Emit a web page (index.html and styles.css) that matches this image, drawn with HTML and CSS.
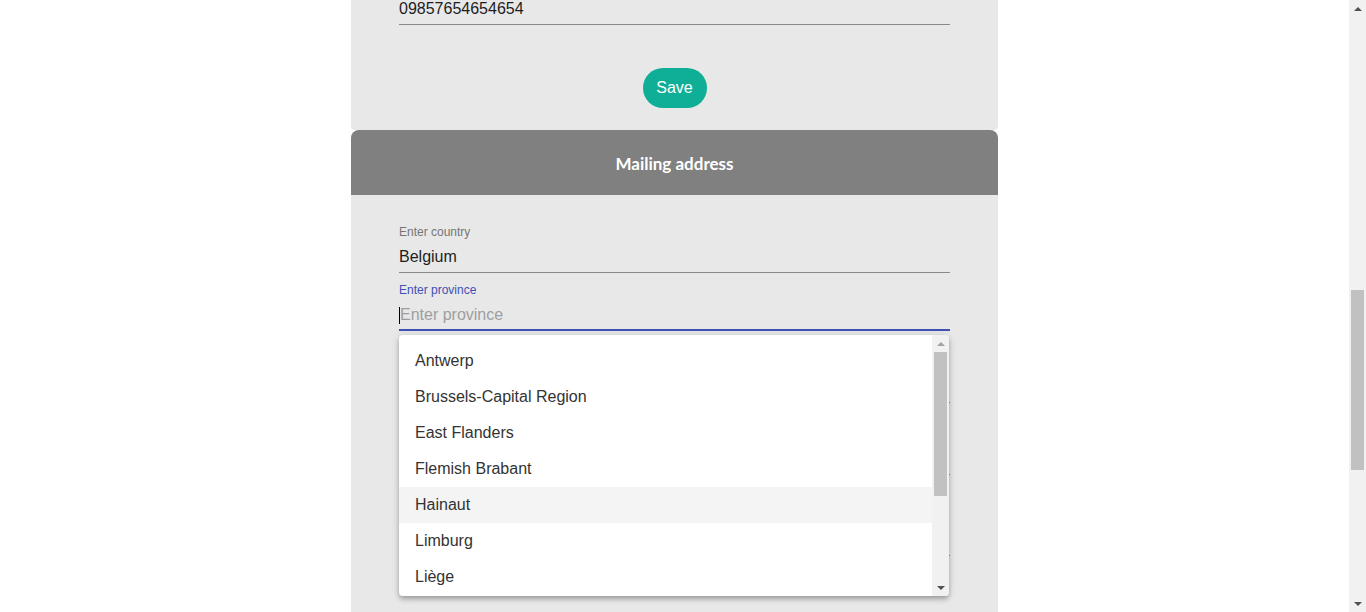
FILE: index.html
```html
<!DOCTYPE html>
<html lang="en">
<head>
<meta charset="utf-8">
<title>Mailing address</title>
<link rel="stylesheet" href="styles.css">
</head>
<body>
<div class="viewport">
  <main class="page">
    <div class="column">
      <section class="card card-top">
        <div class="field">
          <div class="field-input">09857654654654</div>
        </div>
        <div class="actions">
          <button class="btn-save" type="button">Save</button>
        </div>
      </section>
      <section class="card card-address">
        <header class="card-header">Mailing address</header>
        <div class="card-body">
          <div class="field">
            <span class="field-label">Enter country</span>
            <div class="field-input">Belgium</div>
          </div>
          <div class="field focused">
            <span class="field-label">Enter province</span>
            <div class="field-input"><span class="caret"></span><span class="placeholder">Enter province</span></div>
            <div class="dropdown">
              <ul class="options">
                <li class="option">Antwerp</li>
                <li class="option">Brussels-Capital Region</li>
                <li class="option">East Flanders</li>
                <li class="option">Flemish Brabant</li>
                <li class="option active">Hainaut</li>
                <li class="option">Limburg</li>
                <li class="option">Liège</li>
              </ul>
              <div class="mini-scroll">
                <div class="sb-btn"><svg width="8" height="4" viewBox="0 0 8 4"><polygon points="0,4 4,0 8,4" fill="#a3a3a3"/></svg></div>
                <div class="sb-track mini-track"><div class="sb-thumb mini-thumb"></div></div>
                <div class="sb-btn"><svg width="8" height="4" viewBox="0 0 8 4"><polygon points="0,0 8,0 4,4" fill="#505050"/></svg></div>
              </div>
            </div>
          </div>
          <div class="field extra">
            <div class="field-input"></div>
          </div>
          <div class="field extra">
            <div class="field-input"></div>
          </div>
          <div class="field extra last">
            <div class="field-input"></div>
          </div>
        </div>
      </section>
    </div>
  </main>
  <div class="scrollbar">
    <div class="sb-btn"><svg width="8" height="4" viewBox="0 0 8 4"><polygon points="0,4 4,0 8,4" fill="#505050"/></svg></div>
    <div class="sb-track main-track"><div class="sb-thumb main-thumb"></div></div>
    <div class="sb-btn"><svg width="8" height="4" viewBox="0 0 8 4"><polygon points="0,0 8,0 4,4" fill="#505050"/></svg></div>
  </div>
</div>
</body>
</html>
```

FILE: styles.css
```css
html, body {
  margin: 0;
  padding: 0;
  background: #ffffff;
  font-family: "Liberation Sans", Arial, sans-serif;
}

.viewport {
  display: flex;
  height: 612px;
  overflow: hidden;
}

.page {
  flex: 1;
  display: flex;
  justify-content: center;
  overflow: hidden;
}

.column {
  width: 647px;
  display: flex;
  flex-direction: column;
}

.card {
  background: #e8e8e8;
}

.card-top {
  margin-top: -9px;
  padding: 0 48px 22px;
  border-radius: 0 0 4px 4px;
}

.field {
  position: relative;
}

.field + .field {
  margin-top: 9px;
}

.field-label {
  display: block;
  padding-top: 1px;
  font-size: 12px;
  line-height: 14px;
  color: #767676;
}

.field-input {
  padding: 10px 0 7px;
  line-height: 16px;
  font-size: 16px;
  color: #1e1e1e;
  border-bottom: 1px solid #8a8a8a;
  white-space: nowrap;
}

.focused .field-label {
  color: #3f51b5;
}

.focused .field-input {
  height: 16px;
  padding-bottom: 6px;
  border-bottom: 2px solid #3f51b5;
  display: flex;
  align-items: center;
}

.caret {
  width: 1px;
  height: 17px;
  background: #000;
}

.placeholder {
  color: #9e9e9e;
}

.extra .field-input {
  height: 62px;
  padding: 0;
}

.extra.last .field-input {
  height: 71px;
}

.actions {
  display: flex;
  justify-content: center;
  margin-top: 43px;
}

.btn-save {
  width: 64px;
  height: 40px;
  padding: 0;
  border: none;
  border-radius: 20px;
  background: #0fae96;
  color: #ffffff;
  font-family: "Liberation Sans", Arial, sans-serif;
  font-size: 16px;
}

.card-address {
  border-radius: 8px 8px 0 0;
}

.card-header {
  height: 63px;
  padding-top: 2px;
  display: flex;
  align-items: center;
  justify-content: center;
  background: #808080;
  border-radius: 8px 8px 0 0;
  color: #ffffff;
  font-family: Lato, "Open Sans", sans-serif;
  font-weight: 700;
  font-size: 17px;
}

.card-body {
  padding: 29px 48px 200px;
}

.dropdown {
  position: absolute;
  left: 0;
  top: calc(100% + 4px);
  width: 550px;
  height: 261px;
  display: flex;
  background: #ffffff;
  border-radius: 4px;
  overflow: hidden;
  z-index: 10;
  box-shadow: 0 2px 4px -1px rgba(0,0,0,0.2), 0 4px 5px 0 rgba(0,0,0,0.14), 0 1px 10px 0 rgba(0,0,0,0.12);
}

.options {
  flex: 1;
  list-style: none;
  margin: 0;
  padding: 8px 0 0;
}

.option {
  height: 36px;
  line-height: 36px;
  padding: 0 16px;
  font-size: 16px;
  color: #333333;
  white-space: nowrap;
}

.option.active {
  background: #f4f4f4;
}

.scrollbar,
.mini-scroll {
  width: 17px;
  flex: none;
  display: flex;
  flex-direction: column;
  background: #f1f1f1;
}

.sb-btn {
  height: 17px;
  flex: none;
  display: flex;
  align-items: center;
  justify-content: center;
}

.sb-btn svg {
  display: block;
}

.sb-track {
  flex: 1;
  padding: 0 2px;
}

.sb-thumb {
  background: #c1c1c1;
}

.main-track {
  padding-top: 273px;
}

.main-thumb {
  height: 180px;
}

.mini-thumb {
  height: 144px;
}
```
